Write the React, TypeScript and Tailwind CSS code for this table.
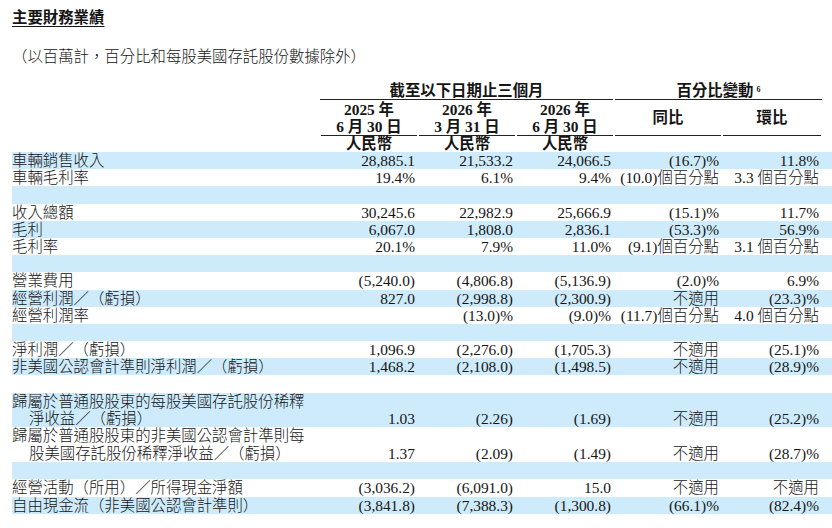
import * as React from "react";

type Row = { label?: React.ReactNode; values?: string[]; tall?: boolean };

const cols = "grid grid-cols-[308px_98px_98px_98px_108px_100px]";

const rows: Row[] = [
  { label: "車輛銷售收入", values: ["28,885.1", "21,533.2", "24,066.5", "(16.7)%", "11.8%"] },
  { label: "車輛毛利率", values: ["19.4%", "6.1%", "9.4%", "(10.0)個百分點", "3.3 個百分點"] },
  {},
  { label: "收入總額", values: ["30,245.6", "22,982.9", "25,666.9", "(15.1)%", "11.7%"] },
  { label: "毛利", values: ["6,067.0", "1,808.0", "2,836.1", "(53.3)%", "56.9%"] },
  { label: "毛利率", values: ["20.1%", "7.9%", "11.0%", "(9.1)個百分點", "3.1 個百分點"] },
  {},
  { label: "營業費用", values: ["(5,240.0)", "(4,806.8)", "(5,136.9)", "(2.0)%", "6.9%"] },
  { label: "經營利潤／（虧損）", values: ["827.0", "(2,998.8)", "(2,300.9)", "不適用", "(23.3)%"] },
  { label: "經營利潤率", values: ["", "(13.0)%", "(9.0)%", "(11.7)個百分點", "4.0 個百分點"] },
  {},
  { label: "淨利潤／（虧損）", values: ["1,096.9", "(2,276.0)", "(1,705.3)", "不適用", "(25.1)%"] },
  {
    label: "非美國公認會計準則淨利潤／（虧損）",
    values: ["1,468.2", "(2,108.0)", "(1,498.5)", "不適用", "(28.9)%"],
  },
  {},
  {
    tall: true,
    label: (
      <>
        歸屬於普通股股東的每股美國存託股份稀釋
        <br />
        <span className="pl-[17px]">淨收益／（虧損）</span>
      </>
    ),
    values: ["1.03", "(2.26)", "(1.69)", "不適用", "(25.2)%"],
  },
  {
    tall: true,
    label: (
      <>
        歸屬於普通股股東的非美國公認會計準則每
        <br />
        <span className="pl-[17px]">股美國存託股份稀釋淨收益／（虧損）</span>
      </>
    ),
    values: ["1.37", "(2.09)", "(1.49)", "不適用", "(28.7)%"],
  },
  {},
  {
    label: "經營活動（所用）／所得現金淨額",
    values: ["(3,036.2)", "(6,091.0)", "15.0", "不適用", "不適用"],
  },
  {
    label: "自由現金流（非美國公認會計準則）",
    values: ["(3,841.8)", "(7,388.3)", "(1,300.8)", "(66.1)%", "(82.4)%"],
  },
];

function DateHead({ year, day }: { year: string; day: string }) {
  return (
    <div className="mx-[1px] flex h-full flex-col items-center justify-center border-b-[1.5px] border-[#222] font-bold leading-[17px]">
      <span>{year}</span>
      <span>{day}</span>
    </div>
  );
}

export default function App() {
  return (
    <div className="h-[528px] w-[832px] overflow-hidden bg-white font-['Liberation_Serif','Noto_Sans_CJK_TC',serif] text-[15.4px] text-[#151515]">
      <div className="pl-[12px] pt-[8px]">
        <div className="h-[20px] leading-[20px] font-bold underline decoration-1 underline-offset-[3px]">
          主要財務業績
        </div>
        <div className="mt-[19px] h-[20px] leading-[20px] font-light">
          （以百萬計，百分比和每股美國存託股份數據除外）
        </div>

        {/* header */}
        <div className={`${cols} mt-[15px] h-[18px] leading-[17px]`}>
          <div />
          <div className="col-span-3 mr-[1px] border-b-[1.5px] border-[#222] text-center font-bold">
            截至以下日期止三個月
          </div>
          <div className="col-span-2 ml-[1px] border-b-[1.5px] border-[#222] text-center font-bold">
            百分比變動<sup className="ml-[3px] text-[8px]">6</sup>
          </div>
        </div>
        <div className={`${cols} h-[36px]`}>
          <div />
          <DateHead year="2025 年" day="6 月 30 日" />
          <DateHead year="2026 年" day="3 月 31 日" />
          <DateHead year="2026 年" day="6 月 30 日" />
          <div className="mx-[1px] flex items-center justify-center border-b-[1.5px] border-[#222] font-bold">同比</div>
          <div className="mx-[1px] flex items-center justify-center border-b-[1.5px] border-[#222] font-bold">環比</div>
        </div>
        <div className={`${cols} h-[16px] leading-[16px] font-bold`}>
          <div />
          <div className="text-center">人民幣</div>
          <div className="text-center">人民幣</div>
          <div className="text-center">人民幣</div>
        </div>

        {/* body */}
        <div className="flex flex-col font-light">
          {rows.map((row, i) => (
            <div
              key={i}
              className={`${cols} ${row.tall ? "h-[34.8px]" : "h-[17.2px]"} leading-[17.2px] ${
                i % 2 === 0 ? "bg-[#cdebfb]" : "bg-white"
              }`}
            >
              <div className="whitespace-nowrap">{row.label}</div>
              {(row.values ?? []).map((v, j) => (
                <div key={j} className="flex items-end justify-end whitespace-nowrap pr-[3px]">
                  {v}
                </div>
              ))}
            </div>
          ))}
        </div>
      </div>
    </div>
  );
}
